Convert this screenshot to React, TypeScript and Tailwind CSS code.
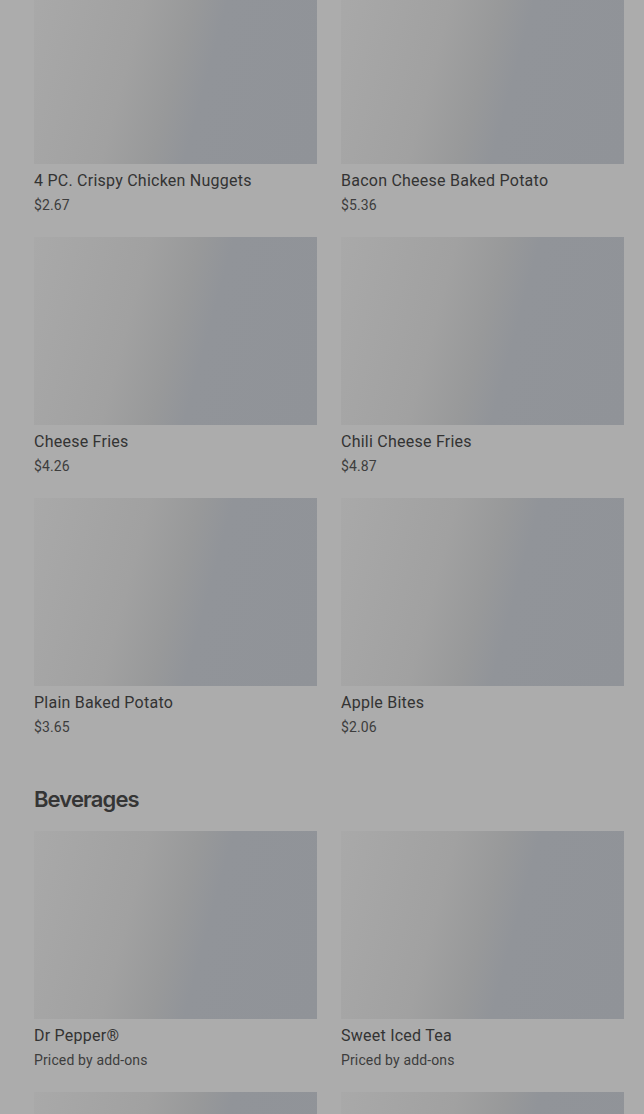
const sides = [
    {name: "4 PC. Crispy Chicken Nuggets", price: "$2.67"},
    {name: "Bacon Cheese Baked Potato", price: "$5.36"},
    {name: "Cheese Fries", price: "$4.26"},
    {name: "Chili Cheese Fries", price: "$4.87"},
    {name: "Plain Baked Potato", price: "$3.65"},
    {name: "Apple Bites", price: "$2.06"},
];

const beverages = [
    {name: "Dr Pepper®", price: "Priced by add-ons"},
    {name: "Sweet Iced Tea", price: "Priced by add-ons"},
    {name: "Coca-Cola®", price: "Priced by add-ons"},
    {name: "Diet Coke®", price: "Priced by add-ons"},
];

function MenuCard({name, price}: { name: string, price: string }) {
    return (
        <div className="flex flex-col">
            <div className="h-[188px] w-full bg-[linear-gradient(105deg,#a9a9a9_0%,#a1a1a1_35%,#98999a_50%,#919499_60%,#909398_100%)]"/>
            <div className="mt-[5px] text-[16px] leading-6 tracking-[0.015em] text-[#333333]">{name}</div>
            <div className="mt-0.5 text-[14px] leading-5 tracking-[0.01em] text-[#3d3d3d]">{price}</div>
        </div>
    )
}

function App() {
    return (
        <main className="w-full min-h-screen bg-[#acacac] font-['Roboto',sans-serif]">
            <div className="mt-[-24px] pl-[34px] pr-5 pb-10">
                <div className="grid grid-cols-2 gap-x-6 gap-y-[22px]">
                    {sides.map((item) => <MenuCard key={item.name} name={item.name} price={item.price}/>)}
                </div>
                <h2 className="mt-[48px] mb-[18px] text-[22px] leading-7 font-semibold tracking-[-0.04em] text-[#353535] font-['Inter',sans-serif]">Beverages</h2>
                <div className="grid grid-cols-2 gap-x-6 gap-y-[22px]">
                    {beverages.map((item) => <MenuCard key={item.name} name={item.name} price={item.price}/>)}
                </div>
            </div>
        </main>
    )
}

export default App
